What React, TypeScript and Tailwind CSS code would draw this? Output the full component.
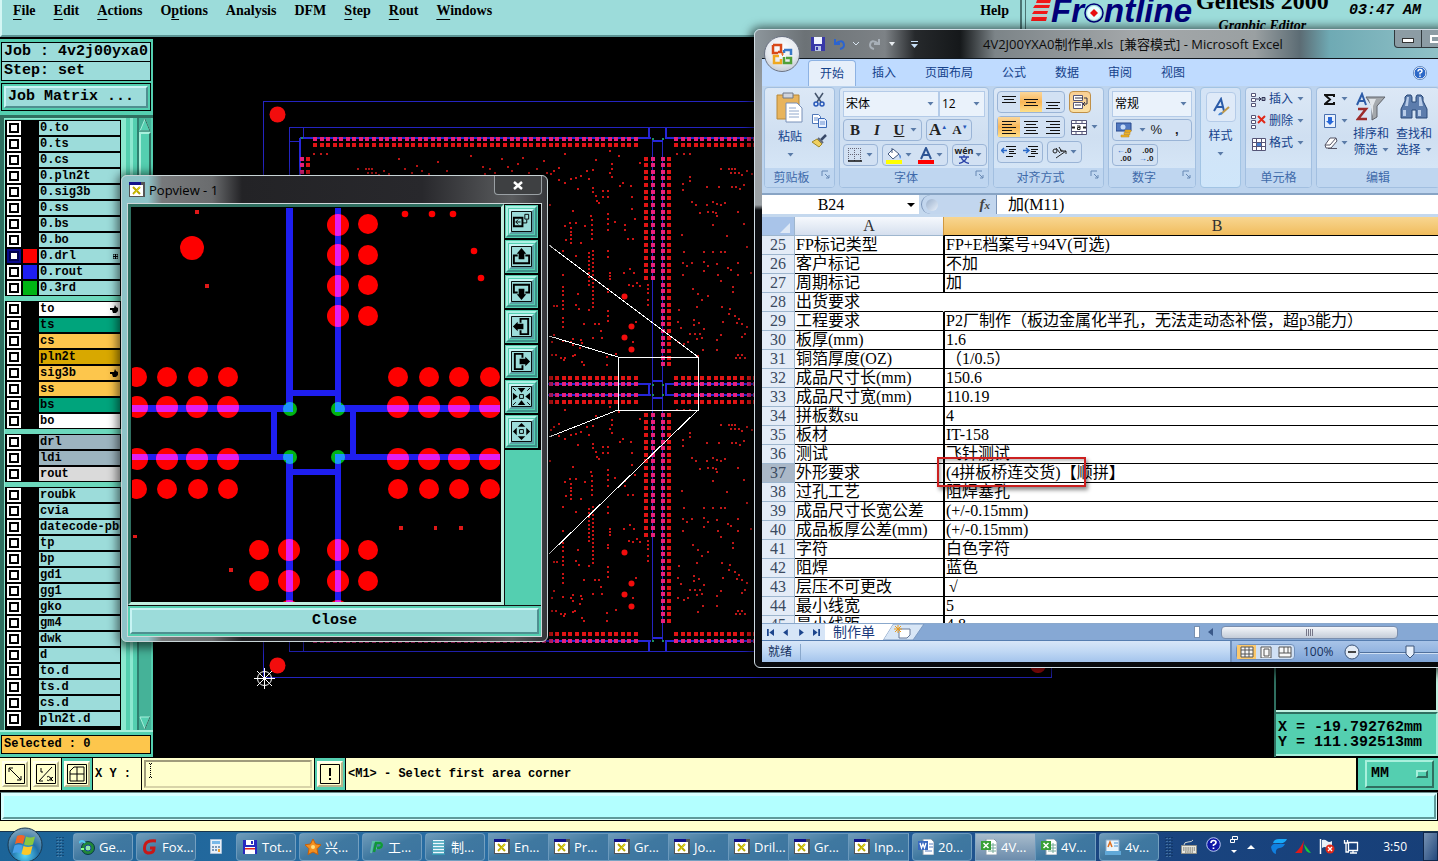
import React from "react";

type Pt = [number, number];

const mono = "font-['Liberation_Mono',monospace]";
const ui = "font-['Open_Sans','Noto_Sans_CJK_SC',sans-serif]";
const song = "font-['Liberation_Serif','Noto_Sans_CJK_SC',serif]";

/* ------------------------------------------------------------------ */
/* Board view                                                          */
/* ------------------------------------------------------------------ */

const range = (from: number, to: number, step: number): number[] => {
  const out: number[] = [];
  for (let v = from; v <= to + 0.01; v += step) out.push(v);
  return out;
};

/* Via holes in thirds of a unit, measured from (540, 90). */
const viasWest: Pt[] = [
  [75,192],[168,210],[237,198],[210,183],[300,218],[216,222],[216,237],[57,234],[42,243],[33,252],[159,240],[141,243],
  [210,249],[216,261],[123,258],[108,264],[93,267],[57,270],[147,267],[75,279],[249,279],[240,288],[273,288],[114,297],
  [159,294],[159,306],[189,303],[204,303],[189,321],[204,321],[168,318],[171,333],[177,339],[276,321],[276,356],[30,345],
  [99,363],[285,387],[204,372],[204,387],[204,402],[204,421],[225,396],[153,378],[156,390],[156,405],[156,420],[156,432],
  [156,447],[90,399],[108,399],[75,408],[93,415],[93,425],[93,435],[93,447],[78,450],[93,458],[123,459],[135,408],
  [255,405],[255,420],[264,447],[279,447],[69,483],[204,483],[204,501],[108,498],[270,537],[282,549],[252,549],[210,549],
  [210,558],[210,567],[69,555],[69,591],[69,603],[69,615],[69,633],[69,645],[69,657],[69,684],[69,696],[69,711],
  [114,612],[108,645],[117,657],[147,660],[42,648],[51,648],[267,585],[279,588],[291,579],[300,588],[324,585],[324,597],
  [324,609],[324,630],[324,645],[204,597],[204,606],[204,663],[204,678],[204,693],[165,702],[177,702],[183,723],[132,702],
  [186,744],[159,744],[42,735],[36,756],[69,753],[93,756],[99,748],[123,750],[127,759],[99,765],[120,774],[279,756],
  [288,696],[228,792],[201,801],[201,825],[36,795],[48,795],[63,804],[75,804],[72,810],[99,798],[105,795],[126,815],[132,825],
  ...range(483, 655, 12).map((y): Pt => [159, y]),
  ...range(489, 595, 12).map((y): Pt => [147, y]),
];

const viasEast: Pt[] = [
  [411,192],[432,192],[450,192],[543,237],[567,237],[573,249],[576,237],[585,237],[585,249],[597,249],[606,255],[620,243],
  [636,252],[450,261],[450,273],[429,282],[429,300],[501,291],[537,291],[576,291],[588,291],[600,297],[612,285],[456,336],
  [468,345],[501,345],[519,336],[531,342],[543,345],[555,339],[480,369],[504,366],[519,366],[528,369],[531,378],[594,366],
  [519,405],[612,402],[426,435],[561,438],[621,471],[432,486],[492,486],[519,486],[543,486],[555,486],[429,519],[441,528],
  [456,519],[492,516],[492,542],[504,528],[531,522],[429,555],[534,555],[564,534],[573,540],[594,519],[594,555],[633,549],
  [459,597],[474,612],[486,630],[504,618],[543,573],[579,591],[579,606],[417,660],[471,651],[462,690],[462,706],[423,714],
  [414,696],[477,699],[450,733],[465,732],[480,732],[492,717],[486,745],[471,748],[546,651],[567,672],[570,657],[585,678],
  [597,687],[591,699],[549,696],[606,702],[621,711],[615,732],[606,741],[531,750],[543,735],[414,756],[432,762],[444,756],
  [489,780],[532,780],[588,804],[594,796],[600,804],[606,796],[615,804],[474,797],
];

const viasTop: Pt[] = [
  [398,158],[404,168],[411,172],[416,165],[421,170],[428,173],[437,161],[446,170],[470,155],[482,166],[484,173],[489,168],
  [494,172],[501,158],[507,166],[511,170],[517,163],[522,157],[528,172],[536,168],[543,160],[546,172],
];

const dots = (pts: Pt[], dx: number, dy: number) =>
  pts.map(([x, y]) => `M${Math.round(540 + x / 3) + dx - 1} ${Math.round(90 + y / 3) + dy - 1}h2v2h-2z`).join("");

const squares = (pts: Pt[]) => pts.map(([x, y]) => `M${Math.round(x) - 2} ${Math.round(y) - 2}h4v4h-4z`).join("");

const cross = (xs: number[], ys: number[]) => xs.flatMap((x) => ys.map((y): Pt => [x, y]));

function BoardView() {
  const xLeft = range(315, 641, 6.55);
  const xRight = range(676, 1000, 6.6);
  const xs = [...xLeft, ...xRight];
  const upperShort = range(158.5, 279, 6.64);
  const upperLong = range(158.5, 366, 6.64);
  const lowerShort = range(415, 536, 6.64);
  const lowerLong = range(415, 622, 6.64);
  const red = [
    ...cross(xs, [145, 378, 402, 634]),
    ...cross([646], upperShort),
    ...cross([669, 308], upperLong),
    ...cross([646], lowerShort),
    ...cross([669, 308], lowerLong),
  ];
  const pink = [
    ...cross(xs, [139, 384, 395, 641]),
    ...cross([653], upperShort),
    ...cross([663, 302], upperLong),
    ...cross([653], lowerShort),
    ...cross([663, 302], lowerLong),
  ];
  return (
    <svg className="block h-full w-full" aria-label="Board view" role="img">
      <g transform="translate(-153 -39)" shapeRendering="crispEdges">
        <g fill="none" stroke="#2424c0">
          <path d="M263.500 101.500H1051.500V677.500H263.500Z" />
          <path d="M289.500 127.500H1027.500V651.500H289.500Z" />
          <path d="M303.500 127V138M303.500 641V651M289 141H299" />
          <path d="M652.500 139V641M662.500 139V641" />
        </g>
        <path
          d="M300 138H651M665 138H1015M300 384H651M665 384H1015M300 395H651M665 395H1015M300 641H651M665 641H1015M300 138V384M300 395V641M649 128V138M666 128V138M649 641V651M666 641V651M649 384V395M666 384V395M653 141H663M653 381H663M653 398H663M653 638H663"
          fill="none"
          stroke="#2626d8"
          strokeWidth="2"
        />
        <path d={squares(red)} fill="#e01414" />
        <path d={squares(pink)} fill="#e8207c" />
        <path
          d="M652 138h2v2h-2zM662 138h2v2h-2zM652 384h2v2h-2zM662 384h2v2h-2zM652 394h2v2h-2zM662 394h2v2h-2zM652 640h2v2h-2zM662 640h2v2h-2zM301 137h2v2h-2z"
          fill="#1c9060"
        />
        <path d={dots(viasWest, 0, 0) + dots(viasWest, 0, 256)} fill="#cc1414" />
        <path d={dots(viasEast, 0, 0) + dots(viasEast, 0, 256) + dots(viasEast, -363, 0)} fill="#c01818" />
        <path d={viasTop.map(([x, y]) => `M${x} ${y}h2v2h-2z`).join("")} fill="#c01414" />
        <g fill="#f20d0d" shapeRendering="auto">
          {([[624,296],[631,326],[624,337],[631,349],[624,552],[631,583],[624,594],[631,606]] as Pt[]).map(([x, y]) => (
            <circle key={`${x}-${y}`} cx={x + 0.5} cy={y + 0.5} r="3" />
          ))}
          <circle cx="277.500" cy="114.500" r="8" />
          <circle cx="277.500" cy="665.500" r="8" />
          <circle cx="1038" cy="665" r="8" fill="#c00c0c" />
        </g>
        <g stroke="#fff" fill="none">
          <path d="M618.500 357.500H698.500V410.500H618.500Z" />
          <path d="M549 245L698 357M549 336L618 357M549 437L618 410M549 554L698 410" />
          <path d="M254 678.500H275M264.500 668V689" />
          <path d="M257 671L272 686M272 671L257 686" />
          <circle cx="264.500" cy="678.500" r="7" shapeRendering="auto" />
        </g>
      </g>
    </svg>
  );
}

/* ------------------------------------------------------------------ */
/* Popview                                                             */
/* ------------------------------------------------------------------ */

const routBars = (
  <>
    <path d="M286 208h7v204h-7zM335 208h6v204h-6zM286 390h55v6h-55z" />
    <path d="M132 405h161v7h-161zM335 405h165v7h-165zM271 405h6v55h-6zM350 405h6v55h-6z" />
    <path d="M132 454h161v6h-161zM335 454h165v6h-165zM286 454h7v148h-7zM335 454h6v148h-6zM286 469h55v6h-55z" />
  </>
);

const bigPads: Pt[] = [
  ...cross([338], [225, 255, 286, 316]),
  ...cross([137, 167, 197, 228, 398, 429, 459, 490], [407, 459]),
  ...cross([289, 338], [550, 581, 611]),
];
const smallPads: Pt[] = [
  ...cross([368], [224, 255, 285, 316]),
  ...cross([137, 167, 198, 228, 398, 429, 459, 490], [377, 489]),
  ...cross([259, 368], [550, 581]),
];
const joints: Pt[] = cross([290, 338], [409, 457]);

function PopviewDrawing() {
  return (
    <svg className="block h-[395px] w-[370px] bg-black" viewBox="131 207 370 395" role="img" aria-label="Magnified area">
      <defs>
        <clipPath id="rout">{routBars}</clipPath>
        <clipPath id="view">
          <path d="M132 208h368v394H132z" />
        </clipPath>
      </defs>
      <g clipPath="url(#view)">
        <g fill="#1e1ef0" shapeRendering="crispEdges">{routBars}</g>
        <g fill="#fe0000">
          {bigPads.map(([x, y]) => <circle key={`b${x}-${y}`} cx={x} cy={y} r="11" />)}
          {smallPads.map(([x, y]) => <circle key={`s${x}-${y}`} cx={x} cy={y} r="10" />)}
          <circle cx="192" cy="248" r="12" />
          {([[405,214],[432,214],[453,214],[474,251],[481,278]] as Pt[]).map(([x, y]) => <circle key={`d${x}`} cx={x} cy={y} r="3.300" />)}
        </g>
        <g fill="#00b414">{joints.map(([x, y]) => <circle key={`j${x}-${y}`} cx={x} cy={y} r="7" />)}</g>
        <path
          fill="#e01818"
          d="M195 210h4v4h-4zM205 284h4v4h-4zM133 535h4v3h-4zM229 568h4v4h-4zM399 526h4v4h-4zM434 526h3v4h-3zM459 526h4v4h-4z"
        />
        <g clipPath="url(#rout)">
          <g fill="#e31ef0">{bigPads.map(([x, y]) => <circle key={`m${x}-${y}`} cx={x} cy={y} r="11" />)}</g>
          <g fill="#1e90ff">{joints.map(([x, y]) => <circle key={`c${x}-${y}`} cx={x} cy={y} r="7" />)}</g>
        </g>
      </g>
    </svg>
  );
}

function XIcon({ className = "h-4 w-4" }: { className?: string }) {
  return (
    <svg className={className} viewBox="0 0 16 16" aria-hidden="true">
      <path d="M0 0h16v15H0z" fill="#555" />
      <path d="M1 3h13v11H1z" fill="#fff" />
      <path d="M0 0h12v3H0z" fill="#10108a" />
      <path d="M12 0h4v3h-4z" fill="#555" />
      <path d="M4 5l7 7M11 5l-7 7" stroke="#b8a800" strokeWidth="2" />
      <path d="M5 12L11 5" stroke="#e8e020" />
    </svg>
  );
}

const popTools: { name: string; art: React.ReactNode }[] = [
  {
    name: "Link view",
    art: (
      <>
        <path d="M3 7h9v9H3z" fill="none" stroke="#000" strokeWidth="2" />
        <path d="M14.500 3.500h4v5h-4zM12 12.500h4.500V9M5 11.500h5M7.500 9L5 11.500 7.500 14" fill="none" stroke="#000" />
      </>
    ),
  },
  { name: "Pan up", art: <><path d="M7 10H3v8h16v-8h-4" fill="none" stroke="#000" strokeWidth="2" /><path d="M8 14V8H6l5-6 5 6h-2v6z" /></> },
  { name: "Pan down", art: <><path d="M7 12H3V4h16v8h-4" fill="none" stroke="#000" strokeWidth="2" /><path d="M8 8v6H6l5 6 5-6h-2V8z" /></> },
  { name: "Pan left", art: <><path d="M10 7V3h8v16h-8v-4" fill="none" stroke="#000" strokeWidth="2" /><path d="M13 8H7V6l-5 5 5 5v-2h6z" /></> },
  { name: "Pan right", art: <><path d="M12 7V3H4v16h8v-4" fill="none" stroke="#000" strokeWidth="2" /><path d="M9 8h6V6l5 5-5 5v-2H9z" /></> },
  {
    name: "Zoom in",
    art: (
      <>
        <path d="M7 2h8l-4 5zM7 20h8l-4-5zM2 7v8l5-4zM20 7v8l-5-4z" />
        <path d="M9 9h4v4H9z" fill="none" stroke="#000" />
        <path d="M2 2l3 3M20 2l-3 3M2 20l3-3M20 20l-3-3" stroke="#000" />
      </>
    ),
  },
  {
    name: "Zoom out",
    art: (
      <>
        <path d="M7 6h8l-4-4zM7 16h8l-4 4zM6 7v8l-4-4zM16 7v8l4-4z" />
        <path d="M9 9h4v4H9z" fill="none" stroke="#000" />
      </>
    ),
  },
];

function Popview() {
  return (
    <section
      aria-label="Popview - 1"
      className="absolute left-[121px] top-[175px] flex h-[467px] w-[427px] flex-col rounded-md border border-[#c8d4d6] bg-[linear-gradient(90deg,#8ec4c8_0,#8ec4c8_26px,#77797b_40px,#6a6c6e_90px,#232326_120px,#28282c_300px,#5a5c5e_390px,#35363a_100%)] px-[5px] pb-1 shadow-[0_2px_10px_4px_rgba(0,0,0,0.55)]"
    >
      <header className="flex h-[27px] shrink-0 items-center gap-1 pl-0.5">
        <XIcon />
        <h2 className={`${ui} text-[13px] leading-5 text-black`}>Popview - 1</h2>
        <button
          aria-label="Close window"
          className="ml-auto flex h-[19px] w-12 items-center justify-center self-start rounded-b border border-t-0 border-[#9aa0a4] bg-[#3e4042] text-white"
        >
          <svg className="h-[9px] w-[10px]" viewBox="0 0 10 9"><path d="M1 1l8 7M9 1L1 8" stroke="#fff" strokeWidth="2.500" /></svg>
        </button>
      </header>
      <div className="flex min-h-0 flex-1 flex-col border border-[#cfd8da] bg-[#101010]">
        <div className="flex min-h-0 flex-1">
          <div className="border-[3px] border-b-[#c0f0e0] border-l-[#2f6f60] border-r-[#c0f0e0] border-t-[#2f6f60]">
            <PopviewDrawing />
          </div>
          <div className="ml-px flex flex-1 flex-col gap-0.5 bg-black pt-px">
            {popTools.map((t) => (
              <button
                key={t.name}
                aria-label={t.name}
                className="flex h-[33px] w-[33px] shrink-0 items-center justify-center border-[3px] border-b-[#3f8f88] border-l-[#aef0e4] border-r-[#3f8f88] border-t-[#aef0e4] bg-[#54cfb0] outline outline-1 -outline-offset-1 outline-[#54cfb0]"
              >
                <span className="flex h-[25px] w-[25px] items-center justify-center border-2 border-b-[#5aa0a4] border-l-[#c8f4f4] border-r-[#5aa0a4] border-t-[#c8f4f4] bg-[#9cdcda]">
                  <svg className="h-[21px] w-[21px] shrink-0" viewBox="0 0 22 22">
                    <path d="M.5 .5h21v21H.5z" fill="none" stroke="#000" />
                    {t.art}
                  </svg>
                </span>
              </button>
            ))}
            <div className="flex-1 bg-[#54cfb0]" />
          </div>
        </div>
        <div className="mt-px bg-[#54cfb0] p-0.5">
          <button
            className={`${mono} block h-[26px] w-full border-2 border-b-[#4f8f90] border-l-[#c8f4f4] border-r-[#4f8f90] border-t-[#c8f4f4] bg-[#9cdcda] text-[15px] font-bold leading-5 text-black`}
          >
            Close
          </button>
        </div>
      </div>
    </section>
  );
}

/* ------------------------------------------------------------------ */
/* Genesis shell                                                       */
/* ------------------------------------------------------------------ */

const menus: { label: string; key: number }[] = [
  { label: "File", key: 0 },
  { label: "Edit", key: 0 },
  { label: "Actions", key: 0 },
  { label: "Options", key: 1 },
  { label: "Analysis", key: -1 },
  { label: "DFM", key: -1 },
  { label: "Step", key: 0 },
  { label: "Rout", key: 0 },
  { label: "Windows", key: 0 },
];

function MenuBar() {
  return (
    <header className="flex h-[39px] shrink-0 overflow-hidden border-b-2 border-black bg-[#9cdcda]">
      <nav className="flex flex-1 items-start border-b-2 border-l-2 border-r-2 border-b-[#5b9494] border-l-[#d4f6f4] border-r-[#4b7474] px-[11px] pt-px font-['Liberation_Serif',serif] text-[14px] font-bold leading-5 text-black">
        <div className="flex gap-[18px]">
          {menus.map(({ label, key }) => (
            <button key={label} className="h-5">
              {key < 0 ? label : <>{label.slice(0, key)}<span className="underline underline-offset-4">{label[key]}</span>{label.slice(key + 1)}</>}
            </button>
          ))}
        </div>
        <button className="ml-auto h-5">Help</button>
      </nav>
      <div className="w-1 border-r border-[#4b7474]" />
      <div className="flex w-[412px] items-start overflow-hidden pl-[5px]">
        <div className="flex items-start text-[#000078]">
          <svg className="h-6 w-5 shrink-0" viewBox="0 0 20 24" aria-hidden="true">
            <path d="M6 0h14l-1 3H5zM4 5h15l-1 3H2zM3 11h14l-1 3H1zM1 17h15l-1 4H0z" fill="#f01818" />
            <path d="M5 4h14M2 10h16M1 16h15" stroke="#f8b0b0" />
          </svg>
          <span className="-mt-[7px] flex items-center font-['Liberation_Sans',sans-serif] text-[33px] font-bold italic leading-9">
            Fr
            <svg className="mt-1 h-5 w-5" viewBox="0 0 20 20" aria-label="o">
              <circle cx="10" cy="10" r="9" fill="#9cdcda" stroke="#000078" strokeWidth="1.500" />
              <circle cx="10" cy="10" r="7" fill="#e8ffff" />
              <path d="M10 6l4 4-4 4-4-4z" fill="#e81010" />
            </svg>
            ntline
          </span>
        </div>
        <div className="-mt-[14px] ml-1 flex flex-col items-center gap-0.5 font-['Liberation_Serif',serif] font-bold text-black">
          <span className="whitespace-nowrap text-[24px] leading-[30px]">Genesis 2000</span>
          <span className="whitespace-nowrap text-[14px] italic leading-4">Graphic Editor</span>
        </div>
        <time className={`${mono} ml-auto mr-[17px] whitespace-nowrap pt-px text-[15px] font-bold italic leading-5 text-black`}>03:47 AM</time>
      </div>
    </header>
  );
}

type Layer = { name: string; tone?: string; swatch?: string; mark?: "hand" | "grid"; on?: boolean };

const cyan = "bg-[#9cdcda]";
const layerGroups: Layer[][] = [
  [
    { name: "0.to" }, { name: "0.ts" }, { name: "0.cs" }, { name: "0.pln2t" }, { name: "0.sig3b" }, { name: "0.ss" },
    { name: "0.bs" }, { name: "0.bo" },
    { name: "0.drl", swatch: "bg-[#fe0000]", mark: "grid", on: true },
    { name: "0.rout", swatch: "bg-[#1e1ef0]" },
    { name: "0.3rd", swatch: "bg-[#00b414]" },
  ],
  [
    { name: "to", tone: "bg-white", mark: "hand" },
    { name: "ts", tone: "bg-[#00a47c]" },
    { name: "cs", tone: "bg-[#fdc64c]" },
    { name: "pln2t", tone: "bg-[#d8a800]" },
    { name: "sig3b", tone: "bg-[#fdc64c]", mark: "hand" },
    { name: "ss", tone: "bg-[#fdc64c]" },
    { name: "bs", tone: "bg-[#00a47c]" },
    { name: "bo", tone: "bg-white" },
  ],
  [
    { name: "drl", tone: "bg-[#9cb4bf]" },
    { name: "ldi", tone: "bg-[#9cb4bf]" },
    { name: "rout", tone: "bg-[#dadada]" },
  ],
  ["roubk", "cvia", "datecode-pbc", "tp", "bp", "gd1", "gg1", "gko", "gm4", "dwk", "d", "to.d", "ts.d", "cs.d", "pln2t.d"].map((name) => ({ name })),
];

function LayerRow({ layer, id }: { layer: Layer; id: string }) {
  return (
    <li className="flex h-4 gap-0.5 pt-px">
      <span className={`flex h-[14px] w-[14px] shrink-0 items-center justify-center ${layer.on ? "bg-[#0a0a8c]" : "bg-white"}`}>
        <input
          id={id}
          type="checkbox"
          className={`h-[10px] w-[10px] appearance-none border-2 bg-white ${layer.on ? "border-[#000050]" : "border-black"}`}
        />
      </span>
      <span className={`h-[14px] w-[14px] shrink-0 ${layer.swatch ?? "bg-black"}`} />
      <label
        htmlFor={id}
        className={`${mono} flex h-[14px] flex-1 items-center overflow-hidden whitespace-nowrap pl-px text-[12px] font-bold leading-[14px] text-black ${layer.tone ?? cyan}`}
      >
        {layer.name}
        {layer.mark === "hand" && (
          <svg className="ml-auto mr-0.5 h-2 w-2" viewBox="0 0 8 8"><path d="M0 3L4 3 5 0 6 2 8 3V6L6 8H3L2 5H0z" /></svg>
        )}
        {layer.mark === "grid" && (
          <svg className="ml-auto mr-0.5 h-[5px] w-[5px]" viewBox="0 0 5 5"><path d="M0 0h5v5H0zM0 2.500h5M2.500 0v5" fill="none" stroke="#000" /></svg>
        )}
      </label>
    </li>
  );
}

function Sidebar() {
  const field = `${mono} border border-black bg-[#9cdcda] px-0.5 text-[15px] leading-[18px] text-black whitespace-nowrap`;
  return (
    <aside className="flex w-[153px] shrink-0 flex-col bg-[#54cfb0] px-px pb-[3px] pt-[3px]">
      <div className="mr-px font-semibold">
        <p className={field}>Job : 4v2j00yxa0</p>
        <p className={`${field} border-t-0`}>Step: set</p>
        <div className="mt-0.5 border border-black p-0.5">
          <button
            className={`${mono} block h-[22px] w-full whitespace-nowrap border-2 border-b-[#4f8f90] border-l-[#c8f4f4] border-r-[#4f8f90] border-t-[#c8f4f4] bg-[#9cdcda] px-0.5 text-left text-[15px] font-semibold leading-4 text-black`}
          >
            Job Matrix ...
          </button>
        </div>
      </div>
      <div className="-mx-px mt-1 flex min-h-0 flex-1 border-b-2 border-t-[3px] border-b-[#a8f0dc] border-t-[#2f6f60]">
        <div className="w-[4px] shrink-0 bg-[#2f6f60]" />
        <div className="flex w-[119px] shrink-0 flex-col gap-[5px] overflow-hidden border-l border-r-2 border-t border-[#8ce8d0] bg-[#6cd8bc] pt-px">
          {layerGroups.map((group, gi) => (
            <ul key={gi} className={`shrink-0 bg-black pl-0.5 pr-px ${gi === 3 ? "pb-1" : ""}`}>
              {group.map((layer) => (
                <LayerRow key={layer.name} layer={layer} id={`layer-${gi}-${layer.name}`} />
              ))}
            </ul>
          ))}
        </div>
        <div className="w-[10px] shrink-0 border-l-[3px] border-r-[3px] border-[#8ce8d0] bg-[#54cfb0]" />
        <div className="ml-[4px] flex w-[14px] shrink-0 flex-col border-l-2 border-[#2f8070] bg-[#45b298]">
          <svg className="h-[14px] w-3" viewBox="0 0 12 14"><path d="M6 1l5 12H1z" fill="#54cfb0" stroke="#a8f0dc" /><path d="M1 13h10L6 1" fill="none" stroke="#2f6f60" /></svg>
          <div className="h-[400px] border-2 border-b-[#2f6f60] border-l-[#a8f0dc] border-r-[#2f6f60] border-t-[#a8f0dc] bg-[#54cfb0]" />
          <svg className="mt-auto h-[14px] w-3" viewBox="0 0 12 14"><path d="M1 1h10L6 13z" fill="#54cfb0" stroke="#a8f0dc" /><path d="M11 1L6 13" stroke="#2f6f60" /></svg>
        </div>
      </div>
      <p className={`${mono} mr-px mt-[3px] border border-black bg-[#fdc64c] px-0.5 text-[12px] font-bold leading-[17px] text-black`}>Selected : 0</p>
    </aside>
  );
}

function ToolSquare({ label, active, children }: { label: string; active?: boolean; children: React.ReactNode }) {
  return (
    <button
      aria-label={label}
      className={`flex h-8 w-[30px] shrink-0 items-center justify-center ${active ? "bg-[#54cfb0]" : "bg-[#ffffcc]"}`}
    >
      <span className="flex h-[26px] w-[26px] items-center justify-center border-2 border-b-[#b8b48c] border-l-[#fffff0] border-r-[#b8b48c] border-t-[#fffff0] bg-[#ffffcc]">
        <svg className="h-5 w-5 shrink-0" viewBox="0 0 20 20" fill="none" stroke="#000">
          <path d="M.5 .5h19v19H.5z" />
          {children}
        </svg>
      </span>
    </button>
  );
}

function CommandBar() {
  return (
    <div className={`${mono} flex h-[35px] shrink-0 gap-px border-b-2 border-t border-black bg-black text-[12px] font-bold text-black`}>
      <ToolSquare label="Select corner"><path d="M4 4l12 12M4 8V4h4M12 16h4v-4" /></ToolSquare>
      <ToolSquare label="Toggle scale"><path d="M3 17L16 3M5 4v4h2M3 17h4M11 16a2 2 0 1 0 0-3M15 13v4M17 13l-2 2 2 2" /></ToolSquare>
      <ToolSquare label="Snap grid" active><path d="M3 7l4-4h10v14H3zM10 3v14M3 10h14" /></ToolSquare>
      <label htmlFor="xy" className="flex w-12 shrink-0 items-center whitespace-nowrap bg-[#ffffcc] px-0.5">X Y :</label>
      <div className="relative w-[172px] shrink-0 bg-[#ffffcc] p-0.5">
        <input
          id="xy"
          className="block h-full w-full border-2 border-b-[#d8d4a8] border-l-[#a09c7c] border-r-[#d8d4a8] border-t-[#a09c7c] bg-[#ffffcc] px-1 outline-none"
          defaultValue=""
        />
        <svg className="pointer-events-none absolute left-[7px] top-[5px] h-[15px] w-[3px]" viewBox="0 0 3 15" aria-hidden="true">
          <path d="M1.500 1v13" stroke="#000" strokeDasharray="1 1" />
          <path d="M0 .5h3M0 14.500h3" stroke="#000" strokeDasharray="1 1" />
        </svg>
      </div>
      <ToolSquare label="Messages" active><path d="M10 4v8M10 14v2" strokeWidth="2" /></ToolSquare>
      <output className="flex flex-1 items-center bg-[#ffffcc] px-0.5">&lt;M1&gt; - Select first area corner</output>
      <div className="ml-px w-20 shrink-0 bg-[#54cfb0] py-0.5 pl-[7px] pr-1">
        <button className="flex h-full w-full items-center justify-between border-2 border-b-[#2f6f60] border-l-[#a8f0dc] border-r-[#2f6f60] border-t-[#a8f0dc] px-1">
          <span className="text-[15px] leading-4">MM</span>
          <span className="h-2 w-3 border-2 border-b-[#2f6f60] border-l-[#a8f0dc] border-r-[#2f6f60] border-t-[#a8f0dc]" />
        </button>
      </div>
    </div>
  );
}

/* ------------------------------------------------------------------ */
/* Spreadsheet window                                                  */
/* ------------------------------------------------------------------ */

const Caret = ({ className = "" }: { className?: string }) => (
  <svg className={`h-1 w-[7px] shrink-0 ${className}`} viewBox="0 0 7 4" aria-hidden="true"><path d="M.5 0h6L3.500 3.500z" fill="#5a7ba8" /></svg>
);

const box = "flex shrink-0 items-center rounded-sm border border-[#9ab4d6] bg-[#d2e1f3]";

function Group({ name, width, launcher, children }: { name: string; width: string; launcher?: boolean; children: React.ReactNode }) {
  return (
    <section className={`flex h-[101px] shrink-0 flex-col overflow-hidden rounded border border-[#a2bfe0] bg-gradient-to-b from-[#dce8f6] via-[#cfdff1] to-[#d9e9f9] ${width}`}>
      <div className="min-h-0 flex-1 px-[3px] pt-[3px]">{children}</div>
      <footer className="relative flex h-[19px] items-center justify-center bg-[#bfd6f0] text-[12px] leading-4 text-[#3e6aaa]">
        <span className={launcher ? "mr-4" : ""}>{name}</span>
        {launcher && (
          <button aria-label={`${name} options`} className="absolute right-1 top-0.5">
            <svg className="h-[9px] w-[9px]" viewBox="0 0 9 9" fill="none" stroke="#6688b4"><path d="M1 6V1h6M4 4l4 4M8 5v3H5" /></svg>
          </button>
        )}
      </footer>
    </section>
  );
}

function Drop({ label, value, width }: { label: string; value: string; width: string }) {
  return (
    <span className={`relative flex h-[26px] shrink-0 items-center border border-[#b4cbe8] bg-[#eaf2fb] ${width}`}>
      <select aria-label={label} className="h-full w-full appearance-none bg-transparent pl-0.5 text-[12px] text-black outline-none">
        <option>{value}</option>
      </select>
      <Caret className="pointer-events-none absolute right-1" />
    </span>
  );
}

function Lines({ rows, top = 0 }: { rows: [number, number][]; top?: number }) {
  return (
    <svg className="h-4 w-4" viewBox="0 0 16 16" shapeRendering="crispEdges" aria-hidden="true">
      {rows.map(([x, w], i) => <rect key={i} x={x} y={top + i * 3} width={w} height="1" fill="#111" />)}
    </svg>
  );
}

const full: [number, number][] = [[1, 14], [3, 10], [1, 14]];
const leftRows: [number, number][] = [[1, 14], [1, 10], [1, 14], [1, 10], [1, 14]];
const centerRows: [number, number][] = [[1, 14], [3, 10], [1, 14], [3, 10], [1, 14]];
const rightRows: [number, number][] = [[1, 14], [5, 10], [1, 14], [5, 10], [1, 14]];

function Seg({ label, on, children, className = "w-[22px]" }: { label: string; on?: boolean; children: React.ReactNode; className?: string }) {
  return (
    <button aria-label={label} className={`flex h-full items-center justify-center ${on ? "bg-gradient-to-b from-[#fbd79a] via-[#f9b655] to-[#fde08a]" : ""} ${className}`}>
      {children}
    </button>
  );
}

function Indent({ flip }: { flip?: boolean }) {
  return (
    <svg className="h-[14px] w-4" viewBox="0 0 16 14" aria-hidden="true">
      <path d="M5 1.500h10M8 4.500h7M8 6.500h5M8 8.500h7M5 11.500h7" stroke="#111" />
      <path d={flip ? "M0 5.500h5M3 3l3 2.500L3 8" : "M6 5.500H1M3 3L.5 5.500 3 8"} fill="none" stroke="#2868c8" strokeWidth="1.500" />
    </svg>
  );
}

function Ribbon() {
  return (
    <div className="flex h-[107px] gap-1 bg-[#bdd4ee] px-0.5 pt-px">
      <Group name="剪贴板" width="w-[71px]" launcher>
        <div className="flex justify-between pl-2 pr-1">
          <button className="flex flex-col items-center text-[12px] leading-4 text-[#15428b]">
            <svg className="h-8 w-7" viewBox="0 0 28 32" aria-hidden="true">
              <path d="M1 4h22v24H1z" fill="#e8b45c" stroke="#b88838" />
              <path d="M7 2h10v5H7z" fill="#d0d4dc" stroke="#707888" />
              <path d="M10 12h11l5 5v14H10z" fill="#fff" stroke="#7890b8" />
              <path d="M13 17h7M13 20h10M13 23h10M13 26h10" stroke="#90a8cc" />
            </svg>
            <span className="mt-1.5">粘贴</span>
            <Caret className="mt-2" />
          </button>
          <div className="flex w-4 flex-col items-center gap-[6px] pt-px">
            <button aria-label="剪切"><svg className="h-4 w-3" viewBox="0 0 12 16" fill="none"><path d="M2 1l6 9M10 1L4 10" stroke="#44546c" strokeWidth="1.500" /><circle cx="3" cy="12" r="2" stroke="#2858b8" strokeWidth="1.500" /><circle cx="9" cy="12" r="2" stroke="#2858b8" strokeWidth="1.500" /></svg></button>
            <button aria-label="复制"><svg className="h-[14px] w-[15px]" viewBox="0 0 15 14"><path d="M.5 .5h6l2 2v7h-8z" fill="#fff" stroke="#5078b8" /><path d="M6.500 4.500h6l2 2v7h-8z" fill="#e8f0ff" stroke="#3868b8" /><path d="M8 8h5M8 10h5M2 4h4M2 6h4" stroke="#6890d0" /></svg></button>
            <button aria-label="格式刷"><svg className="h-[14px] w-[15px]" viewBox="0 0 15 14"><path d="M14 1L9 6" stroke="#384868" strokeWidth="2.500" /><path d="M5 5l5 5-3 3-7-5z" fill="#f0d060" stroke="#a08828" /><path d="M6 4l5 5" stroke="#606878" strokeWidth="2" /></svg></button>
          </div>
        </div>
      </Group>

      <Group name="字体" width="w-[150px]" launcher>
        <div className="flex flex-col gap-0.5">
          <div className="flex"><Drop label="字体" value="宋体" width="w-[96px]" /><Drop label="字号" value="12" width="w-[46px]" /></div>
          <div className="flex gap-1 font-['Liberation_Serif',serif] text-[15px] leading-4 text-[#222]">
            <span className={`${box} h-[22px]`}>
              <Seg label="加粗"><b>B</b></Seg>
              <Seg label="倾斜"><i className="font-bold">I</i></Seg>
              <Seg label="下划线"><u className="font-bold">U</u></Seg>
              <Caret className="mr-1" />
            </span>
            <span className={`${box} h-[22px]`}>
              <Seg label="增大字号"><b className="text-[17px]">A</b><sup className="text-[6px] text-[#2858b8]">▲</sup></Seg>
              <Seg label="减小字号"><b className="text-[13px]">A</b><sup className="text-[6px] text-[#2858b8]">▼</sup></Seg>
            </span>
          </div>
          <div className="mt-px flex gap-1">
            <span className={`${box} h-[22px] pr-1`}>
              <Seg label="边框"><svg className="h-[14px] w-[14px]" viewBox="0 0 14 14"><path d="M.5 0v13M6.500 0v13M12.500 0v13M0 .5h13M0 6.500h13" stroke="#667" strokeDasharray="1 1" /><path d="M0 13h14" stroke="#111" strokeWidth="1.500" /></svg></Seg>
              <Caret />
            </span>
            <span className={`${box} h-[22px] pr-1`}>
              <Seg label="填充颜色"><svg className="h-[17px] w-4" viewBox="0 0 16 17"><path d="M7 2l6 5-6 5-5-5z" fill="#fff" stroke="#445a80" /><path d="M13 7q3 2 1 5z" fill="#2868c8" /><path d="M6 1v5" stroke="#445a80" /><path d="M0 13h16v4H0z" fill="#ff0" /></svg></Seg>
              <Caret />
              <Seg label="字体颜色" className="ml-1 w-5"><svg className="h-[17px] w-4" viewBox="0 0 16 17"><path d="M3 12L8 1l5 11M5 8h6" fill="none" stroke="#2c5494" strokeWidth="2" /><path d="M0 13h16v4H0z" fill="#f00" /></svg></Seg>
              <Caret />
            </span>
            <span className={`${box} h-[22px] pr-1`}>
              <Seg label="拼音指南">
                <span className="flex flex-col items-center text-[9px] font-bold leading-[9px] text-[#222]">
                  wén
                  <svg className="h-[9px] w-3" viewBox="0 0 12 9"><path d="M6 0v1.500M1 2h10M3 2q2 5 8 6.500M9 2Q7 7 1 8.500" fill="none" stroke="#2c44a8" strokeWidth="1.300" /></svg>
                </span>
              </Seg>
              <Caret />
            </span>
          </div>
        </div>
      </Group>

      <Group name="对齐方式" width="w-[111px]" launcher>
        <div className="flex flex-col gap-[3px]">
          <div className="flex gap-1">
            <span className={`${box} h-[22px]`}>
              <Seg label="顶端对齐"><Lines rows={full} top={2} /></Seg>
              <Seg label="垂直居中" on><Lines rows={full} top={5} /></Seg>
              <Seg label="底端对齐"><Lines rows={full} top={8} /></Seg>
            </span>
            <button aria-label="自动换行" className="flex h-[22px] w-[22px] items-center justify-center rounded-sm border border-[#c09048] bg-gradient-to-b from-[#f8cf94] to-[#fbe0a0]">
              <svg className="h-4 w-4" viewBox="0 0 16 16"><path d="M1.500 1.500h9v5h-9zM1.500 8.500h9v6h-9z" fill="#fff" stroke="#557" /><path d="M3 4h8M3 11h6M12 4h3v6h-3M13 8l-2 2 2 2" fill="none" stroke="#334" /></svg>
            </button>
          </div>
          <div className="flex items-center gap-1">
            <span className={`${box} h-[22px]`}>
              <Seg label="左对齐" on><Lines rows={leftRows} top={2} /></Seg>
              <Seg label="居中"><Lines rows={centerRows} top={2} /></Seg>
              <Seg label="右对齐"><Lines rows={rightRows} top={2} /></Seg>
            </span>
            <button aria-label="合并后居中" className="flex items-center gap-1 pl-0.5">
              <svg className="h-[15px] w-4" viewBox="0 0 16 15"><path d="M.5 .5h15v14H.5z" fill="#fff" stroke="#557" /><path d="M.5 3.500h15M.5 11.500h15M5 .5v3M11 .5v3M5 11.500v3M11 11.500v3" stroke="#557" /><path d="M1 7.500h3M15 7.500h-3" stroke="#222" strokeWidth="2" /><path d="M6 6h3v3.500H6.500v-2H9" fill="none" stroke="#222" /></svg>
              <Caret />
            </button>
          </div>
          <div className="flex gap-1">
            <span className={`${box} h-[22px]`}>
              <Seg label="减少缩进"><Indent /></Seg>
              <Seg label="增加缩进"><Indent flip /></Seg>
            </span>
            <span className={`${box} h-[22px] pr-1`}>
              <Seg label="方向"><svg className="h-[14px] w-4" viewBox="0 0 16 14" fill="none" stroke="#222"><circle cx="4" cy="6" r="2" /><path d="M5 3l4 5M8 2l3 5M9 6q3-2 3 1M5 13L15 6M12 6h3v3" /></svg></Seg>
              <Caret />
            </span>
          </div>
        </div>
      </Group>

      <Group name="数字" width="w-[88px]" launcher>
        <div className="flex flex-col gap-0.5">
          <Drop label="数字格式" value="常规" width="w-[80px]" />
          <div className={`${box} h-[22px] justify-between pr-1 font-['Liberation_Sans',sans-serif] text-[13px] text-[#222]`}>
            <span className="flex h-full items-center gap-1">
              <Seg label="会计格式"><svg className="h-4 w-4" viewBox="0 0 16 16"><path d="M0 1h15v8H0z" fill="#5078c0" stroke="#28488c" /><circle cx="7" cy="5" r="2.500" fill="#c8dcf8" /><path d="M9 8h6v2H9zM8 10.500h6v2H8zM5 13h8v2H5z" fill="#f0b428" stroke="#b88010" strokeWidth=".5" /></svg></Seg>
              <Caret />
            </span>
            <Seg label="百分比">%</Seg>
            <Seg label="千位分隔"><b>,</b></Seg>
          </div>
          <div className={`${box} mt-px h-[22px] w-[46px] font-['Liberation_Sans',sans-serif] text-[8px] font-bold leading-[8px] text-[#222]`}>
            <Seg label="增加小数位"><span className="text-right"><span className="text-[#2868c8]">←</span>.0<br />.00</span></Seg>
            <Seg label="减少小数位"><span className="text-right">.00<br /><span className="text-[#2868c8]">→</span>.0</span></Seg>
          </div>
        </div>
      </Group>

      <button className="flex h-[101px] w-[41px] shrink-0 flex-col items-center rounded border border-[#a2c4e4] bg-gradient-to-b from-[#d4e3f5] to-[#cfe6fa] pt-1 text-[12px] leading-4 text-[#15428b]">
        <span className="flex h-[30px] w-[30px] items-center justify-center rounded border border-[#b4cbe8] bg-[#dfeaf8]">
          <svg className="h-5 w-5" viewBox="0 0 20 20"><path d="M3 14L10 2l3 12M6 10h6" fill="none" stroke="#2c5ca8" strokeWidth="2" /><path d="M10 17l8-7" stroke="#c09848" strokeWidth="2" /><path d="M7 18q2-4 5-2-2 3-5 2" fill="#4888d8" /></svg>
        </span>
        <span className="mt-1.5">样式</span>
        <Caret className="mt-2" />
      </button>

      <Group name="单元格" width="w-[67px]">
        <div className="flex flex-col gap-[6px] pl-0.5 text-[12px] leading-4 text-[#15428b]">
          {["插入", "删除", "格式"].map((t, i) => (
            <button key={t} className="flex items-center gap-[3px]">
              <svg className="h-[15px] w-[15px] shrink-0" viewBox="0 0 15 15">
                {i < 2 ? (
                  <><path d="M.5 1.500h4v3h-4zM.5 6.500h4v3h-4zM.5 11.500h4v3h-4z" fill="#fff" stroke="#557" />
                    {i === 0 ? <path d="M5 7h5M8 5l2 2-2 2M11 5.500h3v3h-3z" fill="#9ab" stroke="#335" /> : <path d="M7 2l7 7M14 2L7 9" stroke="#e02818" strokeWidth="2" />}</>
                ) : (
                  <><path d="M1.500 2.500h13v12h-13z" fill="#fff" stroke="#557" /><path d="M1 6.500h14M1 10.500h14M5.500 2v13M10.500 2v13" stroke="#557" /><path d="M6 7h4v3H6z" fill="#4880d0" /></>
                )}
              </svg>
              {t}
              <Caret className="ml-px" />
            </button>
          ))}
        </div>
      </Group>

      <Group name="编辑" width="w-[124px]">
        <div className="flex text-[12px] leading-4 text-[#15428b]">
          <div className="flex w-[28px] shrink-0 flex-col gap-[6px] pl-1">
            <button aria-label="求和" className="flex h-4 items-center justify-between"><svg className="h-[11px] w-[11px]" viewBox="0 0 11 11"><path d="M10 3V1H1l5 4.500L1 10h9V8" fill="none" stroke="#111" strokeWidth="2" /></svg><Caret /></button>
            <button aria-label="填充" className="flex h-4 items-center justify-between"><svg className="h-[14px] w-3" viewBox="0 0 12 14"><path d="M.5 .5h11v13H.5z" fill="#e8f0fc" stroke="#4870b0" /><path d="M4 3h4v4h2l-4 4-4-4h2z" fill="#2868d8" /></svg><Caret /></button>
            <button aria-label="清除" className="flex h-4 items-center justify-between"><svg className="h-3 w-[14px]" viewBox="0 0 14 12"><path d="M6 1h6l1 3-6 7H2L1 8z" fill="#fff" stroke="#556" /><path d="M1 8h5l6-7M4 11.500h9" fill="none" stroke="#556" /></svg><Caret /></button>
          </div>
          <button className="flex w-[46px] flex-col items-center whitespace-nowrap">
            <svg className="mt-px h-[30px] w-[30px]" viewBox="0 0 30 30" aria-hidden="true">
              <path d="M1 13L6 2l4 11M3 9h6" fill="none" stroke="#2c5ca8" strokeWidth="2" />
              <path d="M2 17h8L2 27h9" fill="none" stroke="#9c2c2c" strokeWidth="2.500" />
              <path d="M10 5h19l-8 9v11l-5 3V14z" fill="#a4a8ac" stroke="#60646c" />
              <path d="M13 7h7l-3 7v10z" fill="#e0e4e8" />
            </svg>
            <span className="mt-1">排序和</span>
            <span className="flex items-center gap-1">筛选<Caret /></span>
          </button>
          <button className="flex w-[40px] flex-col items-center whitespace-nowrap">
            <svg className="mt-px h-[30px] w-[30px]" viewBox="0 0 30 30" aria-hidden="true">
              <path d="M6 5l2-2h4l1 2v5h4V5l1-2h4l2 2v4l4 8v9H17v-8h-4v8H2v-9l4-8z" fill="#5c7cac" stroke="#284878" />
              <path d="M8 5h2l-1 9H6zM20 5h2l2 9h-4zM4 18h3v6H4zM19 18h3v6h-3z" fill="#b8cce8" />
            </svg>
            <span className="mt-1">查找和</span>
            <span className="flex items-center gap-1">选择<Caret /></span>
          </button>
        </div>
      </Group>
    </div>
  );
}

const rows: [number, string, string][] = [
  [25, "FP标记类型", "FP+E档案号+94V(可选)"],
  [26, "客户标记", "不加"],
  [27, "周期标记", "加"],
  [28, "出货要求", ""],
  [29, "工程要求", "P2厂制作（板边金属化半孔，无法走动态补偿，超p3能力）"],
  [30, "板厚(mm)", "1.6"],
  [31, "铜箔厚度(OZ)", "（1/0.5）"],
  [32, "成品尺寸长(mm)", "150.6"],
  [33, "成品尺寸宽(mm)", "110.19"],
  [34, "拼板数su", "4"],
  [35, "板材", "IT-158"],
  [36, "测试", "飞针测试"],
  [37, "外形要求", "(4拼板桥连交货)【顺拼】"],
  [38, "过孔工艺", "阻焊塞孔"],
  [39, "成品尺寸长宽公差", "(+/-0.15mm)"],
  [40, "成品板厚公差(mm)", "(+/-0.15mm)"],
  [41, "字符", "白色字符"],
  [42, "阻焊", "蓝色"],
  [43, "层压不可更改", "√"],
  [44, "最小线宽", "5"],
  [45, "最小线距", "4.8"],
];

function Sheet() {
  return (
    <div className="relative h-[406px] overflow-hidden bg-white">
      <table className={`${song} w-full table-fixed border-separate border-spacing-0 text-left text-[16px] leading-[18px] text-black`}>
        <colgroup>
          <col className="w-[33px]" />
          <col className="w-[148px]" />
          <col />
        </colgroup>
        <thead>
          <tr className="text-center text-[#303030]">
            <th className="h-[19px] border-b border-r border-[#9eb6ce] bg-[#a9c4e9] p-0">
              <svg className="ml-auto mr-1 mt-1 h-[10px] w-[10px]" viewBox="0 0 10 10"><path d="M10 0v10H0z" fill="#dfe9f6" /></svg>
            </th>
            <th className="border-b border-[#9eb6ce] bg-gradient-to-b from-[#f6f9fd] to-[#d5dfee] p-0 text-center font-normal">A</th>
            <th className="border-b border-l border-b-black border-l-[#d09840] bg-gradient-to-b from-[#f8d690] to-[#f0bc5c] p-0 text-center font-normal">B</th>
          </tr>
        </thead>
        <tbody>
          {rows.map(([n, a, b]) => (
            <tr key={n}>
              <th className={`h-[19px] border-b border-r border-[#9eb6ce] p-0 text-center font-normal text-[#3a4a60] ${n === 37 ? "bg-[#aab8c8]" : "bg-[#e4ecf7]"}`}>{n}</th>
              <td className="overflow-hidden whitespace-nowrap border-b border-black p-0 pl-px">{a}</td>
              <td className={`overflow-hidden whitespace-nowrap border-b border-l-2 border-b-black py-0 pr-0 ${n === 28 ? "border-l-white" : "border-l-black"} ${n === 43 ? "pl-1" : "pl-px"}`}>{b}</td>
            </tr>
          ))}
        </tbody>
      </table>
      <div className="absolute left-[175px] top-[240px] h-[30px] w-[149px] border-2 border-[#cc2020] shadow-[2px_3px_4px_rgba(0,0,0,0.45),inset_2px_2px_3px_rgba(0,0,0,0.25)]" />
    </div>
  );
}

function SheetTabs() {
  return (
    <div className="flex h-[17px] items-stretch border-t border-[#8aa8cc] bg-[#86a8d4]">
      <div className="flex w-[63px] shrink-0 items-center justify-around bg-[#d6e5f7] px-px">
        {["M6 0v6L2 3zM0 0h1.500v6H0z", "M5 0v6L1 3z", "M1 0v6l4-3z", "M0 0v6l4-3zM4.500 0H6v6H4.500z"].map((d, i) => (
          <button key={i} aria-label={["第一张", "上一张", "下一张", "最后一张"][i]} className="flex items-center"><svg className="h-[7px] w-[7px]" viewBox="0 0 6 6"><path d={d} fill="#1c448c" /></svg></button>
        ))}
      </div>
      <button className="shrink-0 whitespace-nowrap bg-white px-2 text-[14px] leading-4 text-[#1c3c7c]">制作单</button>
      <button aria-label="插入工作表" className="flex shrink-0">
        <svg className="h-4 w-[42px]" viewBox="0 0 42 16">
          <path d="M0 16L10 0H41L30 16z" fill="#d8e6f6" stroke="#7a98c0" />
          <path d="M0 0h10L0 16z" fill="#fff" />
          <path d="M16 5h11v6l-3 3h-8z" fill="#fff" stroke="#667898" />
          <path d="M11 5h8M15 1v8M12 2l6 6M18 2l-6 6" stroke="#e89c20" />
        </svg>
      </button>
      <div className="flex flex-1 items-center pl-[269px]">
        <span className="h-3 w-[6px] border border-[#7890b0] bg-white" />
        <svg className="ml-2 h-2 w-[5px] shrink-0" viewBox="0 0 5 8"><path d="M5 0v8L0 4z" fill="#3a5888" /></svg>
        <span className="ml-2 flex h-[13px] w-[177px] shrink-0 items-center justify-center gap-px rounded-sm border border-[#7a8eae] bg-gradient-to-b from-[#f4f6fa] to-[#c4ccd8]">
          {[0, 1, 2, 3].map((i) => <i key={i} className="h-[7px] w-px bg-[#778]" />)}
        </span>
      </div>
    </div>
  );
}

function ExcelWindow() {
  return (
    <section
      aria-label="Microsoft Excel"
      className={`${ui} absolute left-[754px] top-[29px] flex w-[737px] flex-col rounded-md border border-[#d0dce4] bg-[linear-gradient(180deg,#8a9298_0,#8a9298_26px,#a0a4a8_90px,#9aa0a4_175px,#0c0e12_180px,#08090c_100%)] pb-[5px] pl-[7px] shadow-[0_2px_10px_4px_rgba(0,0,0,0.6)]`}
    >
      <header className="-ml-[7px] flex h-[28px] items-center rounded-t-md bg-[linear-gradient(90deg,#8d969c_0,#6c7276_50px,#7d8286_130px,#26292c_160px,#15181a_205px,#7c8488_240px,#a4a8aa_380px,#9aa0a2_500px,#5c6c74_545px,#6faab4_575px,#a0ccd0_100%)] pl-[56px]">
        <button aria-label="Save"><svg className="h-[14px] w-[14px]" viewBox="0 0 14 14"><path d="M0 0h14v14H0z" fill="#3838a8" /><path d="M3 0h8v7H3z" fill="#f0f4ff" /><path d="M4 9h6v5H4z" fill="#b8c4e8" /><path d="M5 10h2v3H5z" fill="#3838a8" /></svg></button>
        <button aria-label="Undo" className="ml-2 flex items-center gap-2">
          <svg className="h-3 w-3" viewBox="0 0 12 12"><path d="M2 1v5h5M2 6q8-6 9 1 0 3-4 4" fill="none" stroke="#2c64d0" strokeWidth="2" /></svg>
          <svg className="h-1 w-[6px]" viewBox="0 0 6 4"><path d="M0 0l3 3 3-3" fill="none" stroke="#d8e4f0" /></svg>
        </button>
        <button aria-label="Redo" className="ml-2.5 flex items-center gap-2">
          <svg className="h-3 w-3" viewBox="0 0 12 12"><path d="M10 1v5H5M10 6Q2 0 1 7q0 3 4 4" fill="none" stroke="#a8b0b8" strokeWidth="2" /></svg>
          <svg className="h-1 w-[6px]" viewBox="0 0 6 4"><path d="M0 0h6L3 4z" fill="#e8ecf0" /></svg>
        </button>
        <button aria-label="Customize toolbar" className="ml-4"><svg className="h-[7px] w-[7px]" viewBox="0 0 7 7"><path d="M0 .5h7" stroke="#c8e0f8" /><path d="M0 3h7L3.500 7z" fill="#c8e0f8" /></svg></button>
        <h1 className="ml-[65px] whitespace-pre text-[13px] leading-5 text-[#0c0c0c]">4V2J00YXA0制作单.xls  [兼容模式] - Microsoft Excel</h1>
        <div className="ml-auto flex self-start">
          <button aria-label="Minimize" className="flex h-[18px] w-7 items-center justify-center rounded-bl border border-t-0 border-[#30383c] bg-[#8c9ca4]"><i className="mt-1 h-[5px] w-3 border border-[#333] bg-white" /></button>
          <button aria-label="Maximize" className="flex h-[18px] w-7 items-center border-b border-r border-[#30383c] bg-[#8c9ca4] pl-2"><i className="h-2 w-3 border-2 border-white" /></button>
          <button aria-label="Close" className="h-[18px] w-10 rounded-br border-b border-r border-[#30383c] bg-[#c84030]" />
        </div>
      </header>

      <button aria-label="Office" className="absolute left-[9px] top-[6px] flex h-9 w-9 items-center justify-center rounded-full border border-[#6c7484] bg-[radial-gradient(circle_at_50%_35%,#ffffff_0,#e4e8ee_55%,#b0b8c4_100%)]">
        <svg className="h-6 w-6" viewBox="0 0 24 24" fill="none">
          <path d="M3 3h8v7H8M3 3v8h5" stroke="#d84818" strokeWidth="2.500" />
          <path d="M14 8h7v5M14 8v3" stroke="#3878c8" strokeWidth="2.500" />
          <path d="M9 14H4v7h7v-4" stroke="#f0a820" strokeWidth="2.500" />
          <path d="M14 15v6h7v-5h-5" stroke="#50a038" strokeWidth="2.500" />
          <path d="M11 12h3M12.500 10v4" stroke="#e07030" />
        </svg>
      </button>

      <nav className="flex h-[28px] shrink-0 items-end border-t border-[#101820] bg-[#bfdbff] pl-[46px] text-[12px] leading-4 text-[#15428b]">
        <button className="h-[26px] w-12 rounded-t border border-b-0 border-[#8db2e3] bg-[#e6effa]">开始</button>
        {["插入", "页面布局", "公式", "数据", "审阅", "视图"].map((t) => (
          <button key={t} className="ml-[3px] h-[26px] px-[13px]">{t}</button>
        ))}
        <button aria-label="Help" className="mb-1.5 ml-auto mr-[63px]">
          <svg className="h-[14px] w-[14px]" viewBox="0 0 14 14"><circle cx="7" cy="7" r="6" fill="#2c68c8" stroke="#fff" /><circle cx="7" cy="7" r="6.600" fill="none" stroke="#3c68a8" strokeWidth=".7" /><path d="M5 5.500q0-2 2-2t2 1.700Q9 6.500 7 7v1.500M7 9.500V11" fill="none" stroke="#fff" strokeWidth="1.400" /></svg>
        </button>
      </nav>

      <Ribbon />

      <div className={`${song} flex h-[24px] shrink-0 border-t-2 border-[#88a4c4] bg-[#c4d8ee] pb-[3px] text-[16px] leading-[18px] text-black`}>
        <div className="relative w-[157px] shrink-0 bg-white">
          <input aria-label="名称框" defaultValue="B24" className="block h-full w-[138px] bg-transparent text-center outline-none" />
          <svg className="absolute right-1 top-2 h-1 w-2" viewBox="0 0 8 4"><path d="M0 0h8L4 4z" /></svg>
        </div>
        <div className="ml-0.5 flex w-[75px] shrink-0 items-center rounded-l-full border-l border-[#7a94b8] bg-[#c2d6ee] pl-1">
          <span className="h-3 w-3 rounded-full bg-gradient-to-br from-[#9ab0cc] to-[#e8f0fa]" />
          <button aria-label="插入函数" className="ml-auto mr-1.5 text-[15px] font-bold italic text-[#444]">f<span className="text-[11px]">x</span></button>
        </div>
        <input aria-label="编辑栏" defaultValue="加(M11)" className="min-w-0 flex-1 border-l border-[#7a94b8] bg-white pl-[11px] outline-none" />
      </div>

      <Sheet />
      <SheetTabs />

      <footer className="flex h-[22px] shrink-0 items-center border-t border-[#567db0] bg-gradient-to-b from-[#d8e6f8] via-[#c0d8f4] to-[#a4c4ec] text-[12px] leading-4 text-[#15305c]">
        <span className="w-[39px] border-r border-[#8aa8cc] pl-[6px]">就绪</span>
        <div className="ml-auto flex h-full w-[260px] items-center border-l-2 border-[#7090bc] bg-gradient-to-b from-[#a8c4e8] to-[#7fa4d8] pl-1">
          <div className="flex h-4 items-center rounded-sm border border-[#7090bc] bg-[#d0e0f4]">
            {["M1 1h12v10H1zM1 4h12M1 8h12M5 1v10M9 1v10", "M2 1h10v11H2zM5 3h5v7H5z", "M1 1h12v10H1zM6 1v6M10 1v6M1 7h12"].map((d, i) => (
              <button key={i} aria-label={["普通", "页面布局视图", "分页预览"][i]} className={`flex h-full w-[19px] items-center justify-center ${i === 0 ? "bg-[#fbc86c]" : ""}`}>
                <svg className="h-3 w-[14px]" viewBox="0 0 14 12"><path d={d} fill="#f8f8f8" stroke="#555" /></svg>
              </button>
            ))}
          </div>
          <span className="ml-2">100%</span>
          <button aria-label="缩小" className="ml-2.5"><svg className="h-4 w-4" viewBox="0 0 16 16"><circle cx="8" cy="8" r="7" fill="#e4ecf6" stroke="#3c5478" /><path d="M4 8h8" stroke="#444" strokeWidth="2" /></svg></button>
          <svg className="h-4 w-[120px]" viewBox="0 0 120 16" role="img" aria-label="显示比例"><path d="M0 8.500h120" stroke="#50709c" /><path d="M0 9.500h120" stroke="#d0e0f4" /><path d="M46 2h8v8l-4 4-4-4z" fill="#e8f0fa" stroke="#3c5478" /></svg>
        </div>
      </footer>
    </section>
  );
}

/* ------------------------------------------------------------------ */
/* Taskbar                                                             */
/* ------------------------------------------------------------------ */

const taskArt: Record<string, React.ReactNode> = {
  gene: <svg className="h-4 w-4" viewBox="0 0 16 16"><circle cx="9" cy="9" r="6.500" fill="#208838" stroke="#083848" /><circle cx="9" cy="9" r="3" fill="#90e8a8" stroke="#1840a0" /><path d="M0 4q3-4 6 0" stroke="#50c8f0" strokeWidth="2" fill="none" /><path d="M2 10h3" stroke="#8f8" strokeWidth="2" /></svg>,
  fox: <svg className="h-4 w-4" viewBox="0 0 16 16"><path d="M14 2Q5 1 3 6q-2 8 4 8 5 0 5-5H8" fill="none" stroke="#c81818" strokeWidth="3" /></svg>,
  disk: <svg className="h-4 w-4" viewBox="0 0 16 16"><path d="M1 1h14v14H1z" fill="#2828c0" /><path d="M4 1h8v5H4z" fill="#fff" /><path d="M9 2h2v3H9z" fill="#2828c0" /><path d="M3 8h10v7H3z" fill="#fff" /><path d="M3 9h10v1.500H3z" fill="#e02020" /></svg>,
  star: <svg className="h-4 w-4" viewBox="0 0 16 16"><path d="M8 0l2.500 5 5.500.8-4 4 1 5.700L8 13l-5 2.500 1-5.700-4-4L5.500 5z" fill="#f49020" stroke="#c86008" /><circle cx="8" cy="8" r="2" fill="#ffe080" /></svg>,
  p: <svg className="h-4 w-4" viewBox="0 0 16 16"><path d="M3 14L5 3h6q4 1 2 5-2 2-6 1" fill="none" stroke="#5cc0a8" strokeWidth="2" /><path d="M6 13L8 4h4q3 1 1 4-1 1-4 1" fill="none" stroke="#109838" strokeWidth="2.500" /></svg>,
  list: <svg className="h-4 w-4" viewBox="0 0 16 16"><path d="M2 1h11v14H2z" fill="#f0f8ff" /><path d="M1 3h13M1 6h13M1 9h13M1 12h13M1 15h13" stroke="#38a0b8" strokeWidth="1.500" /></svg>,
  word: <svg className="h-4 w-4" viewBox="0 0 16 16"><path d="M5 0h8l3 3v13H5z" fill="#fff" stroke="#89a" /><path d="M11 5h4M11 8h4M7 12h7" stroke="#5a80c0" /><path d="M0 2h10v9H0z" fill="#3868c0" /><path d="M2 4l1.500 5L5 5l1.500 4L8 4" fill="none" stroke="#fff" strokeWidth="1.300" /></svg>,
  xls: <svg className="h-4 w-4" viewBox="0 0 16 16"><path d="M5 0h8l3 3v13H5z" fill="#fff" stroke="#89a" /><path d="M10 6h5M10 9h5M7 12h8M12 4v10" stroke="#7a9" /><path d="M0 2h10v9H0z" fill="#38a038" /><path d="M2.500 4l5 5M7.500 4l-5 5" stroke="#fff" strokeWidth="1.500" /></svg>,
  note: <svg className="h-4 w-4" viewBox="0 0 16 16"><path d="M1 1h13v14H1z" fill="#e8f4fc" stroke="#88a8c8" /><path d="M3 8l2-5 2 5" fill="none" stroke="#e07020" strokeWidth="1.500" /><path d="M9 4h4M9 7h4" stroke="#4890d0" /><path d="M0 12h16v4H0z" fill="#60a8d8" /></svg>,
  x: <XIcon className="h-4 w-4" />,
};

function Task({ art, text, joined, lit }: { art: string; text: string; joined?: boolean; lit?: boolean }) {
  return (
    <button
      className={`flex h-7 shrink-0 items-center gap-1 overflow-hidden whitespace-nowrap border border-[#7fa8c8]/70 pl-[5px] text-[13px] leading-5 text-white ${
        joined ? "-ml-px w-[61px]" : "w-[60px] rounded-sm"
      } ${lit ? "bg-gradient-to-b from-[#a8bccc] to-[#6c8cac]" : "bg-gradient-to-br from-[#6f9cba] via-[#3f78a0] to-[#3c74a0]"}`}
    >
      <span className="shrink-0">{taskArt[art]}</span>
      {text}
    </button>
  );
}

const Grip = () => (
  <svg className="h-5 w-2 shrink-0" viewBox="0 0 8 20" aria-hidden="true">
    <path d="M1 0v20M4 0v20M7 0v20" stroke="#0c2c50" strokeDasharray="1 2" />
    <path d="M2 1v20M5 1v20" stroke="#6c9cc0" strokeDasharray="1 2" />
  </svg>
);

function Taskbar() {
  return (
    <footer className={`${ui} relative flex h-[30px] shrink-0 items-center border-t border-[#16344c] bg-[linear-gradient(90deg,#1c6498_0,#2a6ea4_35%,#23609c_60%,#1a4682_75%,#173f78_100%)] text-white`}>
      <button aria-label="Start" className="absolute -top-[5px] left-[7px] h-9 w-9">
        <svg className="h-9 w-9" viewBox="0 0 36 36">
          <defs><radialGradient id="orb" cx="50%" cy="80%" r="80%"><stop offset="0" stopColor="#58d8f8" /><stop offset=".5" stopColor="#2070a8" /><stop offset="1" stopColor="#88a8bc" /></radialGradient></defs>
          <circle cx="18" cy="18" r="17" fill="url(#orb)" stroke="#183850" />
          <path d="M10 9q4-2 8 0l-2 8q-4-2-8 0z" fill="#f06428" />
          <path d="M19 9.500q4 2 9 0l-2 8q-4 2-9 0z" fill="#88c840" />
          <path d="M7.500 18.500q4-2 8 0l-2 8q-4-2-8 0z" fill="#48a0e8" />
          <path d="M16.500 19q4 2 9 0l-2 8q-4 2-9 0z" fill="#fcc828" />
        </svg>
      </button>
      <div className="ml-[56px]"><Grip /></div>
      <div className="ml-[9px] flex items-center gap-[3px]">
        <Task art="gene" text="Ge..." />
        <Task art="fox" text="Fox..." />
        <button aria-label="Calculator" className="flex w-[34px] justify-center">
          <svg className="h-[15px] w-3" viewBox="0 0 12 15"><path d="M.5 .5h11v14H.5z" fill="#e8f0f8" stroke="#a8c0d8" /><path d="M2 2h8v3H2z" fill="#78b8e8" /><path d="M2 7h2v2H2zM5 7h2v2H5zM2 10h2v2H2zM5 10h2v2H5zM8 7h2v2H8z" fill="#7898b8" /><path d="M8 10h2v3H8z" fill="#f0a030" /></svg>
        </button>
        <Task art="disk" text="Tot..." />
        <Task art="star" text="兴..." />
        <Task art="p" text="工..." />
        <Task art="list" text="制..." />
        <div className="flex pl-px">
          {["En...", "Pr...", "Gr...", "Jo...", "Dril...", "Gr...", "Inp..."].map((t, i) => <Task key={i} art="x" text={t} joined />)}
        </div>
        <Task art="word" text="20..." />
        <div className="flex pl-px">
          <Task art="xls" text="4V..." joined lit />
          <Task art="xls" text="4V..." joined />
        </div>
        <Task art="note" text="4v..." />
      </div>
      <div className="ml-auto flex items-center">
        <Grip />
        <div className="ml-2 flex items-center gap-[9px]">
          <svg className="h-[15px] w-4" viewBox="0 0 16 15" role="img" aria-label="Keyboard"><path d="M3 6q0-3 4-3t5-2" fill="none" stroke="#d0d4d0" /><path d="M.5 6.500h15v8H.5z" fill="#e8e8e0" stroke="#909088" /><path d="M2 9h12M2 11h12M4 13h8" stroke="#606058" strokeDasharray="1.500 .7" /></svg>
          <svg className="-mt-1 h-[15px] w-[15px]" viewBox="0 0 15 15" role="img" aria-label="Help"><circle cx="7.500" cy="7.500" r="6.800" fill="#1018a8" stroke="#b8c8f0" /><path d="M5 6q0-2.500 2.500-2.500T10 5.500Q10 7 7.500 8v1M7.500 10.500V12" fill="none" stroke="#fff" strokeWidth="1.700" /></svg>
          <svg className="-mt-1 h-[18px] w-2" viewBox="0 0 8 18" role="img" aria-label="Restore"><path d="M2.500 .5h5v3h-5zM.5 3.500h4v3h-4z" fill="#1c4880" stroke="#fff" /><path d="M1 14h6l-3 3z" fill="#fff" /></svg>
          <svg className="h-1 w-2" viewBox="0 0 8 4" role="img" aria-label="Show hidden icons"><path d="M0 4h8L4 0z" fill="#fff" /></svg>
        </div>
        <div className="ml-4 flex items-center gap-[8px]">
          <svg className="h-[15px] w-4" viewBox="0 0 16 15" aria-hidden="true"><path d="M2 4q1-4 6-4h8q-2 5-8 4z" fill="#18a8f8" /><path d="M0 8q2-4 6-3h8q-2 4-6 4-4 1-3 6-4-1-5-7" fill="#1080e0" /></svg>
          <svg className="h-[13px] w-4" viewBox="0 0 16 13" aria-hidden="true"><path d="M9 0L7 13H0Q6 8 9 0" fill="#e01818" /><path d="M9 4l7 9q-6 0-7-9" fill="#18c838" /></svg>
          <svg className="h-[15px] w-4" viewBox="0 0 16 15" role="img" aria-label="Action centre"><path d="M1.500 0v15" stroke="#fff" strokeWidth="1.500" /><path d="M3 1q3-1 5 1t5 0v7q-3 2-5 0t-5 0z" fill="#e8f0f8" /><circle cx="11" cy="10" r="4.500" fill="#e02818" /><path d="M9 8l4 4M13 8l-4 4" stroke="#fff" strokeWidth="1.300" /></svg>
          <svg className="h-[15px] w-4" viewBox="0 0 16 15" role="img" aria-label="Network"><path d="M5.500 3.500h9v8h-9zM7 14h7M10 11v3M1.500 1v3h3V1M3 4v9h3" fill="none" stroke="#fff" strokeWidth="1.300" /></svg>
        </div>
        <time className="ml-6 text-[12px] leading-5">3:50</time>
        <button aria-label="Show desktop" className="ml-4 h-[29px] w-[15px] border border-[#10284c] bg-gradient-to-br from-[#7894b4] to-[#24487c]" />
      </div>
    </footer>
  );
}

export default function App() {
  return (
    <main className="relative flex h-screen flex-col overflow-hidden bg-black">
      <MenuBar />
      <div className="flex min-h-0 flex-1">
        <Sidebar />
        <div className="min-w-0 flex-1"><BoardView /></div>
        <div className="flex w-[164px] shrink-0 flex-col border-l-2 border-[#2f6f60] bg-black pb-px">
          <div className="flex-1 border-b-2 border-r-2 border-[#c0f0e0]" />
          <div className={`${mono} border-b-2 border-r-2 border-t-2 border-b-[#a8f0dc] border-r-[#a8f0dc] border-t-[#2f6f60] bg-[#54cfb0] pb-1 pl-0.5 pt-[6px] text-[15px] font-bold leading-[15px] text-black`}>
            <p className="whitespace-pre">X = -19.792762mm</p>
            <p className="whitespace-pre">Y = 111.392513mm</p>
          </div>
        </div>
      </div>
      <CommandBar />
      <div className="shrink-0 bg-[#ffffcc] pb-2.5">
        <div className="border border-black border-t-[#6c8c8c] bg-[#d8ffff] p-px">
          <div className="h-[25px] border-2 border-b-[#5f9a9a] border-l-[#d8ffff] border-r-[#5f9a9a] border-t-[#d8ffff] bg-[#b3ffff]" />
        </div>
      </div>
      <Taskbar />
      <Popview />
      <ExcelWindow />
    </main>
  );
}
